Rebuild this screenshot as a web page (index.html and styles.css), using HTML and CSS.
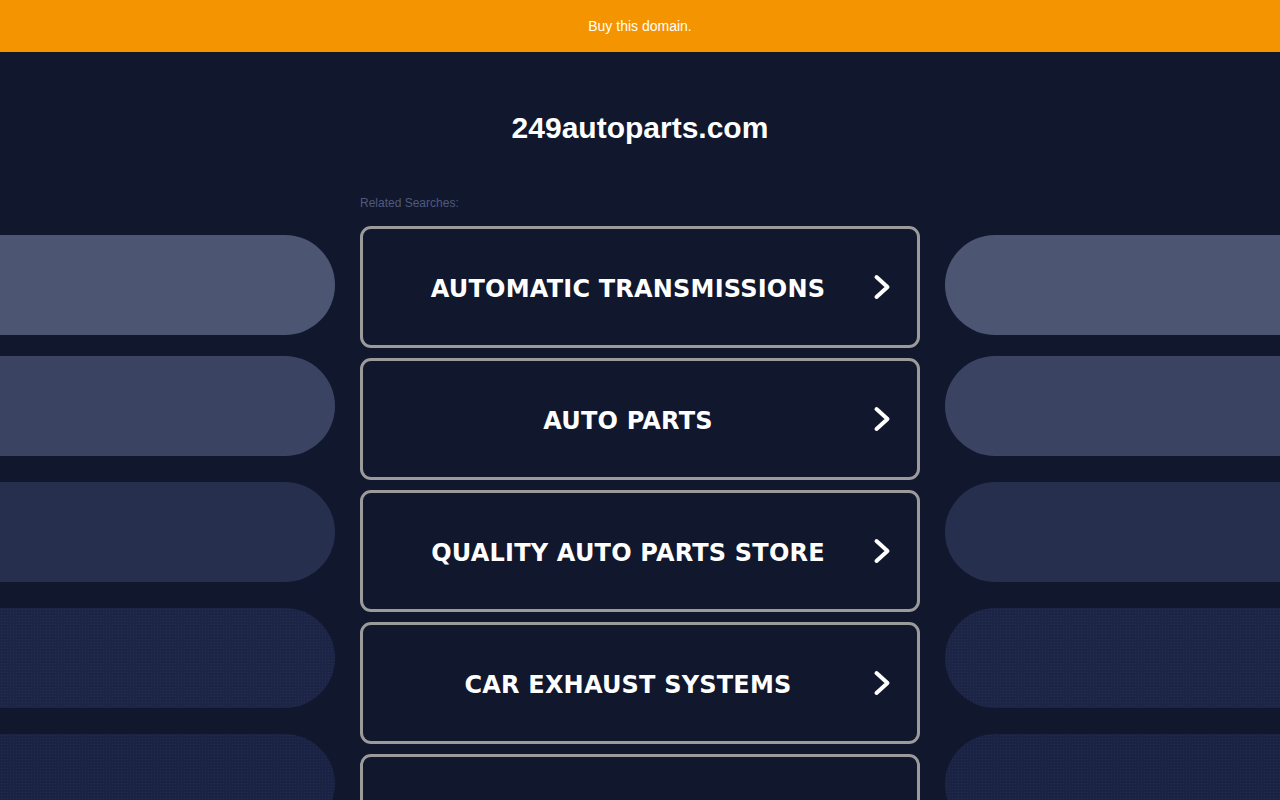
FILE: index.html
```html
<!DOCTYPE html>
<html lang="en">
<head>
<meta charset="utf-8">
<title>249autoparts.com</title>
<link rel="stylesheet" href="styles.css">
</head>
<body>
<div class="topbar"><a class="buy" href="#">Buy this domain.</a></div>
<h1 class="domain">249autoparts.com</h1>
<div class="main">
  <div class="side side-left">
    <div class="pill p1"></div>
    <div class="pill p2"></div>
    <div class="pill p3"></div>
    <div class="pill p4 dotted"></div>
    <div class="pill p5 dotted"></div>
  </div>
  <div class="center">
    <div class="label">Related Searches:</div>
    <a class="search" href="#"><span class="txt">AUTOMATIC TRANSMISSIONS</span><svg class="chev" viewBox="0 0 18 28" width="18" height="28"><path d="M3.5 4 L14.5 14 L3.5 24" fill="none" stroke="#fff" stroke-width="4" stroke-linecap="round" stroke-linejoin="round"/></svg></a>
    <a class="search" href="#"><span class="txt">AUTO PARTS</span><svg class="chev" viewBox="0 0 18 28" width="18" height="28"><path d="M3.5 4 L14.5 14 L3.5 24" fill="none" stroke="#fff" stroke-width="4" stroke-linecap="round" stroke-linejoin="round"/></svg></a>
    <a class="search" href="#"><span class="txt">QUALITY AUTO PARTS STORE</span><svg class="chev" viewBox="0 0 18 28" width="18" height="28"><path d="M3.5 4 L14.5 14 L3.5 24" fill="none" stroke="#fff" stroke-width="4" stroke-linecap="round" stroke-linejoin="round"/></svg></a>
    <a class="search" href="#"><span class="txt">CAR EXHAUST SYSTEMS</span><svg class="chev" viewBox="0 0 18 28" width="18" height="28"><path d="M3.5 4 L14.5 14 L3.5 24" fill="none" stroke="#fff" stroke-width="4" stroke-linecap="round" stroke-linejoin="round"/></svg></a>
    <a class="search" href="#"><span class="txt">AUTO PARTS ONLINE</span><svg class="chev" viewBox="0 0 18 28" width="18" height="28"><path d="M3.5 4 L14.5 14 L3.5 24" fill="none" stroke="#fff" stroke-width="4" stroke-linecap="round" stroke-linejoin="round"/></svg></a>
  </div>
  <div class="side side-right">
    <div class="pill p1"></div>
    <div class="pill p2"></div>
    <div class="pill p3"></div>
    <div class="pill p4 dotted"></div>
    <div class="pill p5 dotted"></div>
  </div>
</div>
</body>
</html>
```
FILE: styles.css
```css
html, body {
  margin: 0;
  padding: 0;
  height: 800px;
  overflow: hidden;
}
body {
  background: #11172d;
  font-family: "Liberation Sans", Arial, sans-serif;
  color: #fff;
}
.topbar {
  height: 52px;
  background: #f39400;
  display: flex;
  align-items: center;
  justify-content: center;
}
.buy {
  color: #fff;
  font-size: 14px;
  text-decoration: none;
  line-height: 16px;
}
.domain {
  margin: 58px 0 0;
  text-align: center;
  font-size: 30px;
  line-height: 36px;
  font-weight: bold;
  color: #fff;
}
.main {
  margin-top: 44px;
  display: flex;
  gap: 25px;
}
.side {
  width: 335px;
  flex: none;
  padding-top: 45px;
  display: flex;
  flex-direction: column;
  gap: 26px;
}
.pill {
  height: 100px;
  flex: none;
}
.pill.p1 { margin-bottom: -5px; }
.side-left .pill { border-radius: 0 50px 50px 0; }
.side-right .pill { border-radius: 50px 0 0 50px; }
.p1 { background-color: #4c5673; }
.p2 { background-color: #3a4361; }
.p3 { background-color: #262f4e; }
.p4 { background-color: #1c2545; }
.p5 { background-color: #1a2343; }
.dotted {
  background-image: radial-gradient(circle, rgba(60, 72, 110, 0.3) 0.6px, transparent 0.9px);
  background-size: 3px 3px;
}
.center {
  width: 560px;
  flex: none;
}
.label {
  margin-top: 6px;
  font-size: 12px;
  line-height: 14px;
  color: #4f5a7b;
  margin-bottom: 16px;
}
.search {
  box-sizing: border-box;
  height: 122px;
  margin-bottom: 10px;
  border: 3px solid #9b9b9b;
  border-radius: 11px;
  display: flex;
  align-items: center;
  padding: 0 26px 0 20px;
  text-decoration: none;
  color: #fff;
}
.txt {
  flex: 1;
  text-align: center;
  font-family: "DejaVu Sans", Verdana, sans-serif;
  font-weight: bold;
  font-size: 24px;
  letter-spacing: 0.2px;
  line-height: 28px;
  padding-top: 3px;
}
.chev {
  flex: none;
  display: block;
}
```
